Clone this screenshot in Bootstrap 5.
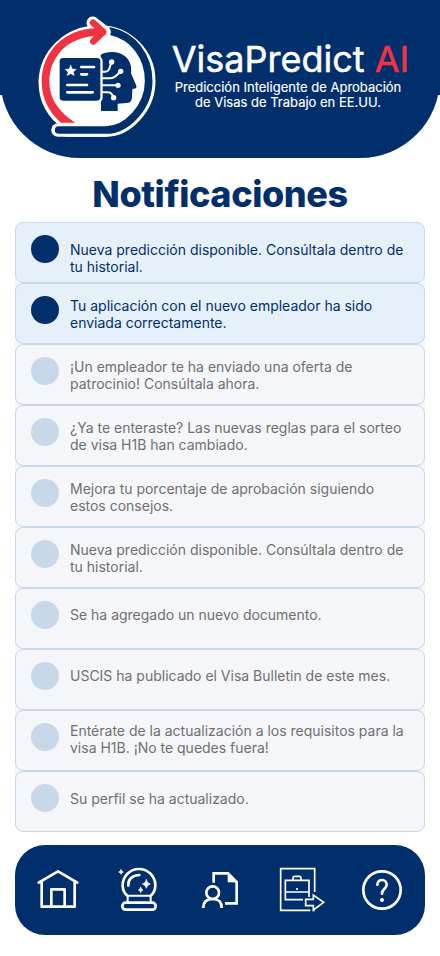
<!DOCTYPE html>
<html lang="es">
<head>
<meta charset="utf-8">
<meta name="viewport" content="width=device-width, initial-scale=1">
<title>VisaPredict AI</title>
<link href="https://cdn.jsdelivr.net/npm/bootstrap@5.3.0/dist/css/bootstrap.min.css" rel="stylesheet">
<style>
:root{--navy:#002f6c;--red:#ef3340;--line:#c8d8e8}
body{font-family:Inter,"Liberation Sans",sans-serif;width:440px;height:956px;background:#fff}
.app-header{height:158px;border-radius:0 0 80px 80px;background:var(--navy)}
.header-wrap{background:linear-gradient(var(--navy) 95px,#fff 95px)}
.logo{width:135px;height:135px;margin:10px 0 0 30px}
.brand{width:250px;margin:38px 0 0 -2px}
.brand-name{font-size:36px;line-height:42px;padding-left:5px;-webkit-text-stroke:.5px currentColor}
.brand-name span{color:var(--red)}
.brand-sub{font-size:13px;line-height:15px;-webkit-text-stroke:.15px currentColor}
.page-title{font-size:36px;line-height:44px;font-weight:800;letter-spacing:-.4px;color:var(--navy);margin-top:14px;margin-bottom:6px}
.notes{margin:0 15px;background:#f4f6fa;border-radius:8px}
.note{height:61px;border:1px solid var(--line);border-radius:8px;background:#f4f6fa;color:#707070;padding:0 15px}
.note p{font-size:14px;line-height:17px;white-space:nowrap;letter-spacing:-.005px}
.note.unread{background:#e6f0fb;color:var(--navy)}
.dot{width:28px;height:28px;background:var(--line);margin:12px 11px 0 0}
.unread .dot{background:var(--navy)}
.two{margin-top:13px}.one{margin-top:17px}.low{margin-top:18px}.high{margin-top:11px}
.tabs{height:90px;margin:13px 15px 0;padding:0 2px;border-radius:30px;background:var(--navy)}
.tabs a{width:81px;height:90px}
.tabs svg{width:81px;height:90px;display:block;fill:none;stroke:#fff;stroke-width:8;stroke-linejoin:round;stroke-linecap:round}
</style>
<script src="https://cdn.jsdelivr.net/npm/bootstrap@5.3.0/dist/js/bootstrap.bundle.min.js"></script>
</head>
<body>
<div class="header-wrap">
<header class="app-header d-flex align-items-start">
<svg class="logo flex-shrink-0" viewBox="0 0 405 405" fill="none" stroke-linecap="round" stroke-linejoin="round">
<path d="M112 338C68 312 46 265 46 215A160 153 0 0 1 200 66H208A148 147 0 0 1 356 213C356 292 290 360 228 360H110Z" fill="#fff" stroke="#fff" stroke-width="41"/>
<path d="M84 360H228" stroke="#fff" stroke-width="41"/>
<path d="M242 64C310 78 356 140 356 213C356 292 290 360 228 360H86" stroke="#002f6c" stroke-width="23"/>
<path d="M188 38L224 66L190 94" stroke="#fff" stroke-width="37"/>
<path d="M93 338H136C88 308 58 266 58 216C58 136 118 80 200 78V55C108 55 35 122 35 216C35 266 58 308 93 338Z" fill="#ef3340"/>
<path d="M189 38L219 66L190 94" stroke="#ef3340" stroke-width="20"/>
<path d="M196 66H217" stroke="#ef3340" stroke-width="23"/>
<path d="M212 134C230 124 265 122 284 138C300 150 306 170 303 190L319 227C321 232 318 235 311 236L307 238L306 263C305 274 300 279 290 279L263 281V303H213Z" fill="#002f6c"/>
<rect x="84" y="139" width="134" height="138" rx="14" fill="#fff"/>
<rect x="89" y="144" width="122" height="128" rx="10" fill="#002f6c"/>
<path d="M122 165L127 177L139 178L130 186L133 197L122 191L111 197L114 186L105 178L117 177Z" fill="#fff" stroke="#fff" stroke-width="1"/>
<path d="M154 171H192M154 193H171M112 225H171M112 247H188" stroke="#fff" stroke-width="8"/>
<path d="M218 185H226C238 184 239 175 243 158M218 205H240C255 204 260 195 270 186M218 226H262M218 247H235C245 247 247 255 251 262" stroke="#fff" stroke-width="6"/>
<g fill="#fff"><circle cx="245" cy="156" r="8"/><circle cx="272" cy="184" r="8"/><circle cx="264" cy="226" r="8"/><circle cx="251" cy="263" r="8"/></g>
</svg>
<div class="brand text-center text-white flex-shrink-0">
<div class="brand-name text-nowrap">VisaPredict <span>AI</span></div>
<div class="brand-sub text-nowrap">Predicción Inteligente de Aprobación<br>de Visas de Trabajo en EE.UU.</div>
</div>
</header>
</div>
<main>
<h1 class="page-title text-center">Notificaciones</h1>
<section class="notes">
<article class="note unread d-flex"><i class="dot rounded-circle flex-shrink-0"></i><p class="low mb-0">Nueva predicción disponible. Consúltala dentro de<br>tu historial.</p></article>
<article class="note unread d-flex"><i class="dot rounded-circle flex-shrink-0"></i><p class="two mb-0">Tu aplicación con el nuevo empleador ha sido<br>enviada correctamente.</p></article>
<article class="note d-flex"><i class="dot rounded-circle flex-shrink-0"></i><p class="two mb-0">¡Un empleador te ha enviado una oferta de<br>patrocinio! Consúltala ahora.</p></article>
<article class="note d-flex"><i class="dot rounded-circle flex-shrink-0"></i><p class="two mb-0">¿Ya te enteraste? Las nuevas reglas para el sorteo<br>de visa H1B han cambiado.</p></article>
<article class="note d-flex"><i class="dot rounded-circle flex-shrink-0"></i><p class="two mb-0">Mejora tu porcentaje de aprobación siguiendo<br>estos consejos.</p></article>
<article class="note d-flex"><i class="dot rounded-circle flex-shrink-0"></i><p class="two mb-0">Nueva predicción disponible. Consúltala dentro de<br>tu historial.</p></article>
<article class="note d-flex"><i class="dot rounded-circle flex-shrink-0"></i><p class="one mb-0">Se ha agregado un nuevo documento.</p></article>
<article class="note d-flex"><i class="dot rounded-circle flex-shrink-0"></i><p class="one mb-0">USCIS ha publicado el Visa Bulletin de este mes.</p></article>
<article class="note d-flex"><i class="dot rounded-circle flex-shrink-0"></i><p class="high mb-0">Entérate de la actualización a los requisitos para la<br>visa H1B. ¡No te quedes fuera!</p></article>
<article class="note d-flex"><i class="dot rounded-circle flex-shrink-0"></i><p class="low mb-0">Su perfil se ha actualizado.</p></article>
</section>
</main>
<nav class="tabs d-flex">
<a href="#" aria-label="Inicio"><svg viewBox="-9 -15 243 270"><path d="M56 98L114 64L172 98M65 95V170H164V95M94 170V118H134V170"/></svg></a>
<a href="#" aria-label="Predicción"><svg viewBox="234 -15 243 270"><path d="M323 138C311 129 308 118 308 106A49 49 0 0 1 406 106C406 118 403 129 391 138"/><path d="M325 107C323 89 336 76 358 75"/><path d="M323 137H392V156M323 137V156" stroke-width="6"/><rect x="307" y="158" width="100" height="21" rx="10" stroke-width="8"/><path d="M379 89Q381 100 391 102Q381 104 379 115Q377 104 367 102Q377 100 379 89ZM362 112Q363 119 369 120Q363 121 362 128Q361 121 355 120Q361 119 362 112ZM303 59Q304 65 310 66Q304 67 303 73Q302 67 296 66Q302 65 303 59Z" fill="#fff" stroke-width="2"/></svg></a>
<a href="#" aria-label="Perfil"><svg viewBox="-3 -15 243 270"><g stroke-linejoin="miter" stroke-linecap="butt"><path d="M101 98V70H144L170 96V160H135"/><path d="M144 69V96H171Z" fill="#fff" stroke-width="2"/><circle cx="98" cy="128" r="19"/><path d="M70 174C70 154 80 147 98 147S125 154 125 174"/></g></svg></a>
<a href="#" aria-label="Empleo"><svg viewBox="240 -15 243 270"><g stroke-width="5" stroke-linejoin="miter" stroke-linecap="butt"><path d="M404 126V56H302V181H391M404 181H398M369 149H316V91H387V141M316 126H387M339 90V84Q339 79 344 79H358Q363 79 363 84V90M377 148H400V135L431 157L400 180V167H377Z"/><path d="M351 114V120"/></g></svg></a>
<a href="#" aria-label="Ayuda"><svg viewBox="33 30 243 270"><circle cx="156" cy="165" r="56"/><path d="M142 149C142 130 170 131 170 149C170 162 156 161 156 176"/><circle cx="156" cy="195" r="6" fill="#fff" stroke="none"/></svg></a>
</nav>
</body>
</html>
